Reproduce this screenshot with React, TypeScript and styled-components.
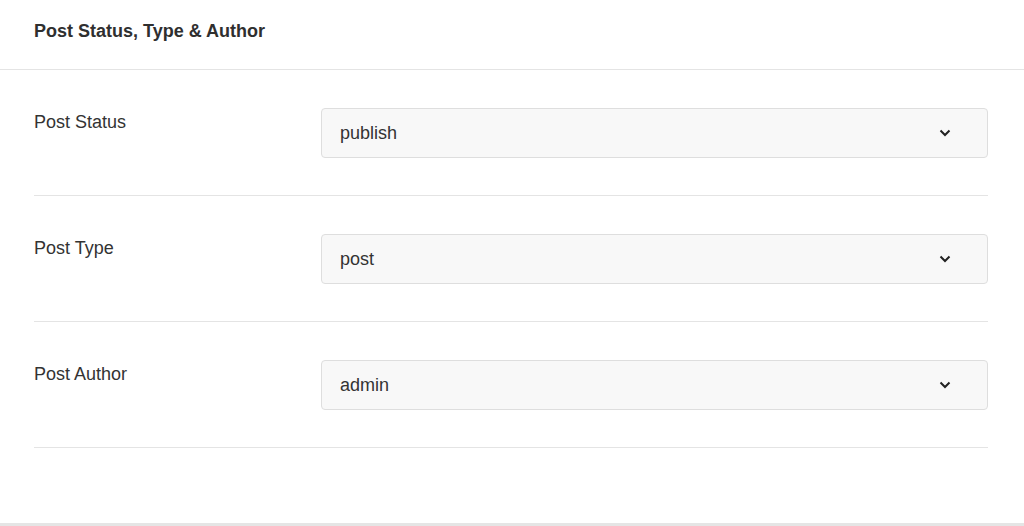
import React from "react";
import styled, { createGlobalStyle } from "styled-components";

const Global = createGlobalStyle`
  html, body { margin: 0; padding: 0; background: #e5e5e5; }
  body { font-family: "Liberation Sans", Arial, Helvetica, sans-serif; color: #333; }
`;

const Card = styled.div`
  background: #fff;
  height: 523px;
  box-sizing: border-box;
`;

const Header = styled.div`
  height: 69px;
  border-bottom: 1px solid #e4e4e4;
  display: flex;
  align-items: center;
  padding: 0 34px;
  box-sizing: content-box;
`;

const Title = styled.h2`
  margin: 0;
  font-size: 18px;
  font-weight: 700;
  color: #2f2f2f;
  line-height: 24px;
  padding-bottom: 7px;
`;

const Body = styled.div`
  padding: 0 36px 0 34px;
`;

const Row = styled.div`
  display: grid;
  grid-template-columns: 287px 1fr;
  align-items: start;
  padding: 38px 0 37px;
  border-bottom: 1px solid #e4e4e4;
`;

const Label = styled.label`
  font-size: 18px;
  line-height: 26px;
  color: #333;
  padding-top: 1px;
`;

const SelectBox = styled.div`
  height: 50px;
  box-sizing: border-box;
  border: 1px solid #dedede;
  border-radius: 4px;
  background: #f8f8f8;
  display: flex;
  align-items: center;
  justify-content: space-between;
  padding: 0 36px 0 18px;
  font-size: 18px;
  color: #333;
`;

const Chevron = () => (
  <svg width="12" height="8" viewBox="0 0 12 8" aria-hidden="true">
    <polyline points="1.5,1.5 6,6 10.5,1.5" fill="none" stroke="#222" strokeWidth="2" />
  </svg>
);

const fields = [
  { label: "Post Status", value: "publish" },
  { label: "Post Type", value: "post" },
  { label: "Post Author", value: "admin" },
];

export default function App() {
  return (
    <>
      <Global />
      <Card>
        <Header>
          <Title>Post Status, Type &amp; Author</Title>
        </Header>
        <Body>
          {fields.map((f) => (
            <Row key={f.label}>
              <Label>{f.label}</Label>
              <SelectBox>
                <span>{f.value}</span>
                <Chevron />
              </SelectBox>
            </Row>
          ))}
        </Body>
      </Card>
    </>
  );
}
